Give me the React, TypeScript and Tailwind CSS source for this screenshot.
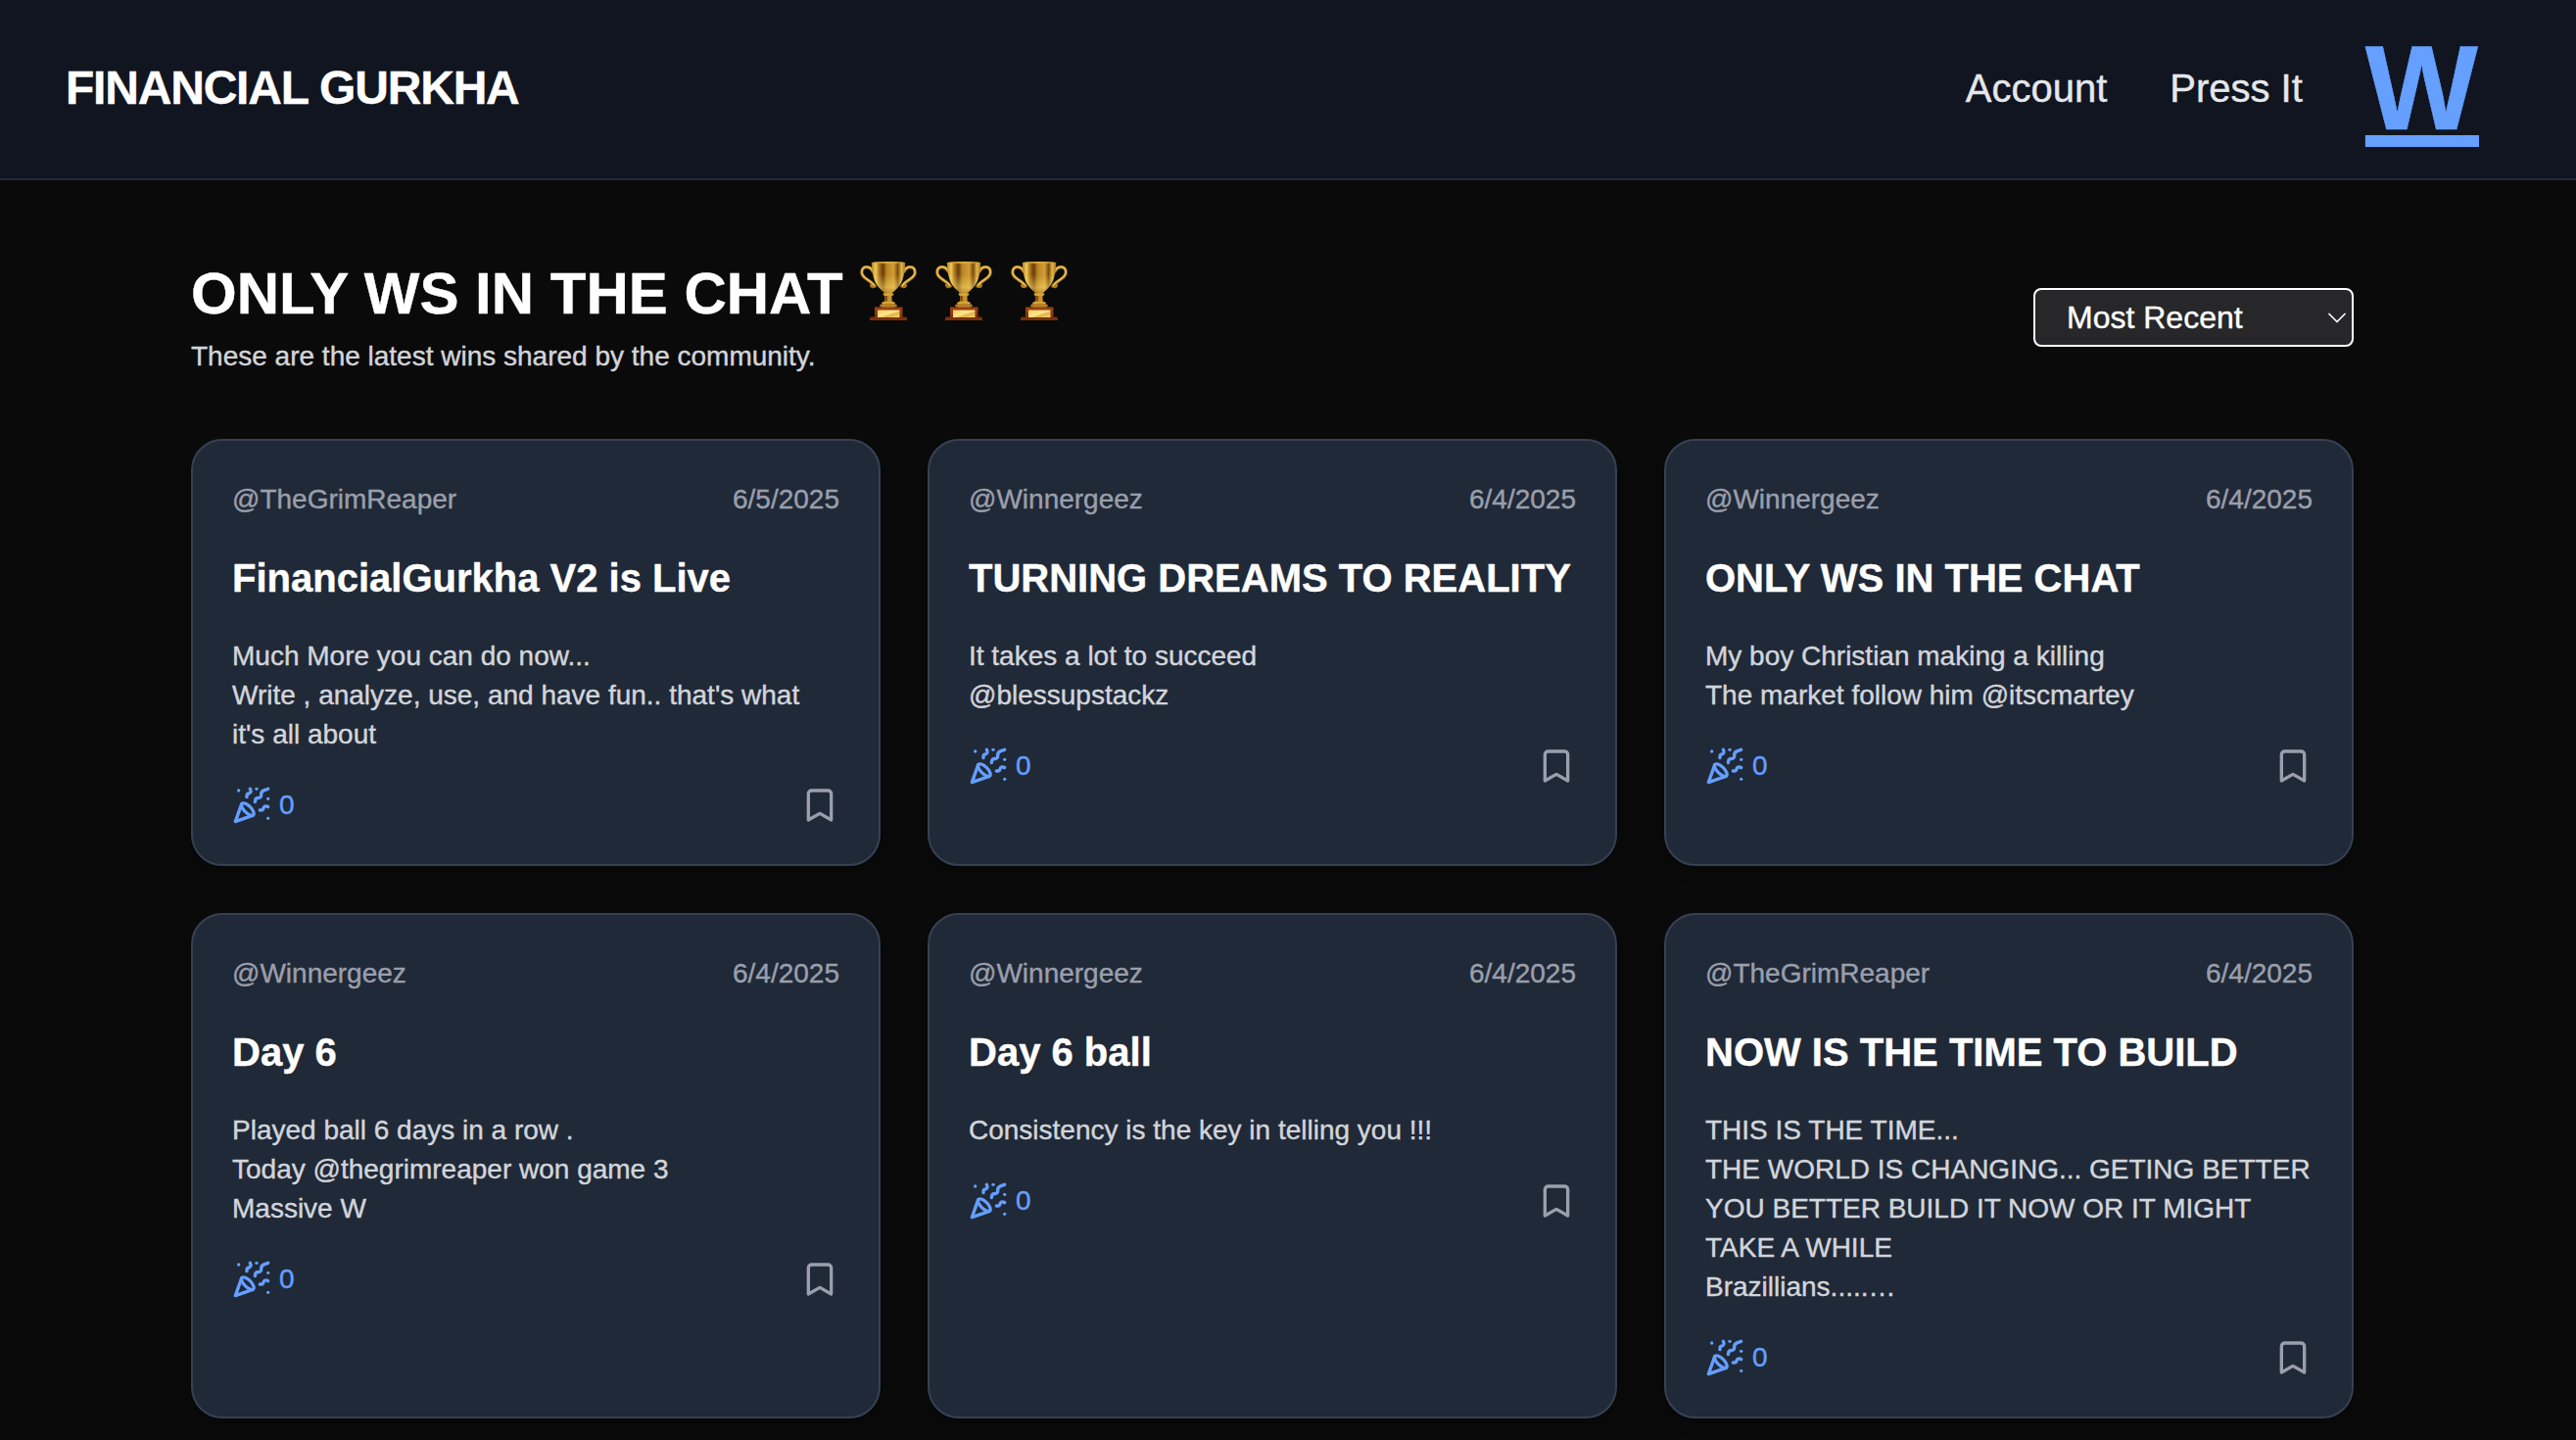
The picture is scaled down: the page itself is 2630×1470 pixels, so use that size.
import React from "react";
import { Bookmark, PartyPopper } from "lucide-react";

type Win = { user: string; date: string; title: string; body: string };

const wins: Win[] = [
  {
    user: "@TheGrimReaper",
    date: "6/5/2025",
    title: "FinancialGurkha V2 is Live",
    body: "Much More you can do now...\nWrite , analyze, use, and have fun.. that's what it's all about",
  },
  {
    user: "@Winnergeez",
    date: "6/4/2025",
    title: "TURNING DREAMS TO REALITY",
    body: "It takes a lot to succeed\n@blessupstackz",
  },
  {
    user: "@Winnergeez",
    date: "6/4/2025",
    title: "ONLY WS IN THE CHAT",
    body: "My boy Christian making a killing\nThe market follow him @itscmartey",
  },
  {
    user: "@Winnergeez",
    date: "6/4/2025",
    title: "Day 6",
    body: "Played ball 6 days in a row .\nToday @thegrimreaper won game 3\nMassive W",
  },
  {
    user: "@Winnergeez",
    date: "6/4/2025",
    title: "Day 6 ball",
    body: "Consistency is the key in telling you !!!",
  },
  {
    user: "@TheGrimReaper",
    date: "6/4/2025",
    title: "NOW IS THE TIME TO BUILD",
    body: "THIS IS THE TIME...\nTHE WORLD IS CHANGING... GETING BETTER\nYOU BETTER BUILD IT NOW OR IT MIGHT TAKE A WHILE\nBrazillians.....…",
  },
];

function TrophyGradients() {
  return (
    <svg className="absolute size-0" aria-hidden="true">
      <defs>
        <linearGradient id="cup" x1="0" x2="1" y1="0" y2="0">
          <stop offset="0" stopColor="#b07a1c" />
          <stop offset="0.12" stopColor="#f0cc5a" />
          <stop offset="0.24" stopColor="#a06c1a" />
          <stop offset="0.34" stopColor="#6b3f0a" />
          <stop offset="0.46" stopColor="#bb8626" />
          <stop offset="0.66" stopColor="#d09c33" />
          <stop offset="0.78" stopColor="#7a4c0e" />
          <stop offset="0.89" stopColor="#e0b546" />
          <stop offset="1" stopColor="#a8701a" />
        </linearGradient>
        <linearGradient id="cupShine" x1="0" x2="0" y1="0" y2="1">
          <stop offset="0.4" stopColor="#f6dc6c" stopOpacity="0" />
          <stop offset="0.8" stopColor="#f6dc6c" stopOpacity="0.5" />
          <stop offset="1" stopColor="#b98124" stopOpacity="0.6" />
        </linearGradient>
        <linearGradient id="plate" x1="0" x2="1" y1="0" y2="1">
          <stop offset="0" stopColor="#f3cf62" />
          <stop offset="0.5" stopColor="#fbe58b" />
          <stop offset="0.65" stopColor="#e3b04d" />
          <stop offset="1" stopColor="#f7db74" />
        </linearGradient>
        <linearGradient id="wood" x1="0" x2="0" y1="0" y2="1">
          <stop offset="0" stopColor="#9a4416" />
          <stop offset="1" stopColor="#7c2f0b" />
        </linearGradient>
      </defs>
    </svg>
  );
}

function Trophy() {
  return (
    <svg viewBox="0 0 60 62" className="inline-block h-[62px] w-[60px] align-[-7px]" role="img" aria-label="trophy">
      <g fill="none" strokeLinecap="round">
        <path d="M14 12C11 6 3 6 2.800 13C2.800 20 13 21 16 27C14 28 12.500 27.500 12.500 26" stroke="#a97820" strokeWidth="3.200" />
        <path d="M14 11.500C11 6 3 6 2.800 13C3 19.500 13 21 15.500 26.500" stroke="#ecc75c" strokeWidth="1.500" />
        <path d="M46 12C49 6 57 6 57.200 13C57.200 20 47 21 44 27C46 28 47.500 27.500 47.500 26" stroke="#a97820" strokeWidth="3.200" />
        <path d="M46 11.500C49 6 57 6 57.200 13C57 19.500 47 21 44.500 26.500" stroke="#ecc75c" strokeWidth="1.500" />
      </g>
      <path d="M25 32H35L33.800 38Q33.500 44 37 48H23Q26.500 44 26.200 38Z" fill="url(#cup)" />
      <path d="M12.800 3Q30 1 47.200 3C47 12 45.500 20 42 25.500Q36 34 30 35Q24 34 18 25.500C14.500 20 13 12 12.800 3Z" fill="url(#cup)" />
      <path d="M12.800 3Q30 1 47.200 3C47 12 45.500 20 42 25.500Q36 34 30 35Q24 34 18 25.500C14.500 20 13 12 12.800 3Z" fill="url(#cupShine)" />
      <path d="M12.800 3Q30 1 47.200 3Q30 5 12.800 3Z" fill="#d9a93c" />
      <ellipse cx="30" cy="35.500" rx="5.500" ry="1.600" fill="#d6a63a" />
      <ellipse cx="30" cy="44.500" rx="7" ry="2" fill="#d6a63a" />
      <ellipse cx="30" cy="47" rx="9" ry="2.300" fill="#b98124" />
      <path d="M16 48.500H44.500V60H16Z" fill="url(#wood)" />
      <path d="M11 62V60Q11 58.500 13 58.500H47Q49 58.500 49 60V62Z" fill="#7c2f0b" />
      <path d="M19 51.500H41.500V59H19Z" fill="url(#plate)" />
    </svg>
  );
}

function Header() {
  return (
    <header className="flex h-[184px] items-center justify-between border-b-2 border-[#212a3a] bg-[#101520] pr-[99px] pb-0.5 pl-[67px]">
      <div className="text-5xl/[64px] font-bold tracking-tight text-white">FINANCIAL GURKHA</div>
      <nav className="flex items-center gap-16 text-[40px]/[56px] text-gray-200">
        <a>Account</a>
        <a>Press It</a>
        <a className="text-[122px]/[122px] font-bold tracking-[1px] text-[#659fff] underline decoration-[12px] underline-offset-[6px] [-webkit-text-stroke:0.6px]">W</a>
      </nav>
    </header>
  );
}

function SortSelect() {
  return (
    <button className="flex h-[60px] w-[327px] items-center justify-between rounded-lg border-2 border-white bg-[#272729] pr-[6px] pl-8 text-[32px]/[48px] text-white">
      <span>Most Recent</span>
      <svg viewBox="0 0 18 11" className="h-[11px] w-[18px]" fill="none" stroke="currentColor" strokeWidth="1.700" strokeLinecap="round" strokeLinejoin="round">
        <path d="M1 1.500L9 9.500L17 1.500" />
      </svg>
    </button>
  );
}

function WinCard({ win }: { win: Win }) {
  return (
    <article className="flex flex-col gap-8 rounded-[32px] border-2 border-[#374152] bg-[#202937] p-10 shadow-lg">
      <div className="flex justify-between text-[28px]/[40px] text-[#9a9fac]">
        <span>{win.user}</span>
        <span>{win.date}</span>
      </div>
      <h2 className="text-[40px]/[56px] font-bold whitespace-nowrap text-white">{win.title}</h2>
      <p className="text-[28px]/[40px] whitespace-pre-line text-[#d2d5db]">{win.body}</p>
      <div className="flex items-center justify-between">
        <button className="flex items-center gap-2 text-[28px]/[40px] text-[#659fff]">
          <PartyPopper size={40} />
          <span>0</span>
        </button>
        <Bookmark size={40} className="text-[#9a9fac]" />
      </div>
    </article>
  );
}

export default function App() {
  return (
    <div className="h-[1470px] overflow-hidden bg-[#0a0a0a] font-['Liberation_Sans',Arial,sans-serif] [-webkit-text-stroke:0.4px]">
      <Header />
      <TrophyGradients />
      <main className="ml-[195px] w-[2208px] pt-20">
        <div className="mb-16 flex items-center justify-between">
          <div>
            <h1 className="h-[72px] text-[60px]/[72px] font-bold whitespace-nowrap text-white">
              ONLY WS IN THE CHAT <Trophy /> <Trophy /> <Trophy />
            </h1>
            <p className="mt-2 text-[28px]/[40px] text-[#d2d5db]">These are the latest wins shared by the community.</p>
          </div>
          <SortSelect />
        </div>
        <div className="grid grid-cols-3 gap-12">
          {wins.map((win) => (
            <WinCard key={win.title} win={win} />
          ))}
        </div>
      </main>
    </div>
  );
}
